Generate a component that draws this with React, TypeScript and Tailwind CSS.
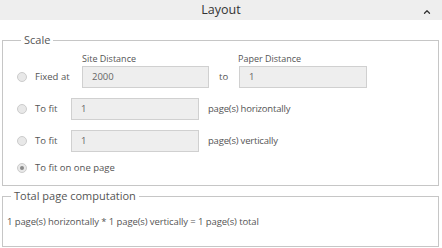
import { ChevronUp } from "lucide-react";

function Radio({ checked = false }: { checked?: boolean }) {
  return (
    <span className="flex h-[10px] w-[10px] shrink-0 items-center justify-center rounded-full border border-[#cccccc] bg-[#e8e8e8]">
      {checked && <span className="h-[4px] w-[4px] rounded-full bg-[#8a8a8a]" />}
    </span>
  );
}

function Box({ value, width }: { value: string; width: string }) {
  return (
    <div className={`flex h-[22px] items-center border border-[#d0d0d0] bg-[#eeeeee] pl-[9px] text-[9.5px] text-[#666] ${width}`}>
      {value}
    </div>
  );
}

export default function App() {
  return (
    <div className="h-[248px] w-[442px] bg-white font-['Open_Sans',sans-serif] text-[#555]">
      <header className="relative flex h-[20px] items-center justify-center bg-[#eeeeee] text-[12.5px] text-[#333]">
        Layout
        <ChevronUp size={10} strokeWidth={3} className="absolute right-[10px] top-[7px] text-[#333]" />
      </header>

      <fieldset className="ml-[2px] mt-[12px] w-[437px] border border-[#c6c6c6] pb-[10px] pl-[14px] pt-[4px]">
        <legend className="ml-[4px] px-[3px] text-[11px] leading-[16px] text-[#555]">Scale</legend>

        <div className="flex h-[12px] items-center text-[9px] leading-none">
          <span className="ml-[65px] w-[156px]">Site Distance</span>
          <span>Paper Distance</span>
        </div>

        <div className="mt-[2px] flex h-[22px] items-center text-[9.5px]">
          <Radio />
          <span className="ml-[8px] w-[47px]">Fixed at</span>
          <Box value="2000" width="w-[127px]" />
          <span className="ml-[10px] w-[20px]">to</span>
          <Box value="1" width="w-[128px]" />
        </div>

        <div className="mt-[10px] flex h-[22px] items-center text-[9.5px]">
          <Radio />
          <span className="ml-[8px] w-[36px]">To fit</span>
          <Box value="1" width="w-[128px]" />
          <span className="ml-[9px] tracking-[-0.2px]">page(s) horizontally</span>
        </div>

        <div className="mt-[10px] flex h-[22px] items-center text-[9.5px]">
          <Radio />
          <span className="ml-[8px] w-[36px]">To fit</span>
          <Box value="1" width="w-[128px]" />
          <span className="ml-[9px] tracking-[-0.2px]">page(s) vertically</span>
        </div>

        <div className="mt-[9px] flex h-[14px] items-center text-[9.5px]">
          <Radio checked />
          <span className="ml-[8px]">To fit on one page</span>
        </div>
      </fieldset>

      <fieldset className="ml-[2px] mt-[2px] h-[59px] w-[437px] border border-[#c6c6c6] pl-[4px]">
        <legend className="ml-[4px] px-[3px] text-[11px] leading-[16px] text-[#555]">Total page computation</legend>
        <div className="mt-[11px] text-[9.5px] tracking-[-0.1px]">
          1 page(s) horizontally * 1 page(s) vertically = 1 page(s) total
        </div>
      </fieldset>
    </div>
  );
}
